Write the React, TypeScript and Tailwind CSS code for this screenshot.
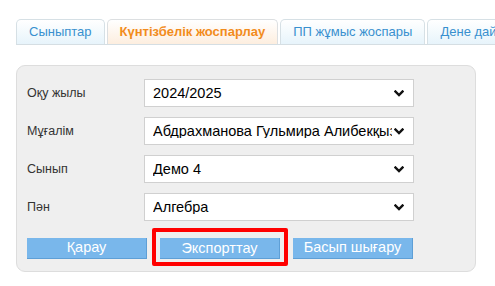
import React from 'react';

const tabs = [
  { label: 'Сыныптар', active: false },
  { label: 'Күнтізбелік жоспарлау', active: true },
  { label: 'ПП жұмыс жоспары', active: false },
  { label: 'Дене дайындығы', active: false },
];

const fields = [
  { label: 'Оқу жылы', value: '2024/2025' },
  { label: 'Мұғалім', value: 'Абдрахманова Гульмира Алибекқызы' },
  { label: 'Сынып', value: 'Демо 4' },
  { label: 'Пән', value: 'Алгебра' },
];

const Chevron = () => (
  <svg width="10" height="7" viewBox="0 0 10 7" className="shrink-0">
    <path d="M1.5 1.5 L5 5 L8.5 1.5" fill="none" stroke="#111" strokeWidth="2.4" strokeLinecap="square" />
  </svg>
);

const Field = ({ label, value }: { label: string; value: string }) => (
  <div className="flex items-center h-[28px]">
    <div className="w-[117px] text-[12.5px] text-[#333]">{label}</div>
    <div className="flex items-center w-[270px] h-[28px] bg-white border border-[#d0d0d0] pl-[8px] pr-[9px] gap-[2px]">
      <span className="flex-1 overflow-hidden whitespace-nowrap text-[14.5px] text-black leading-none">{value}</span>
      <Chevron />
    </div>
  </div>
);

const Btn = ({ children }: { children: React.ReactNode }) => (
  <button className="w-[120px] h-[21px] bg-[#79b7eb] border-b border-r border-[#5e9fd6] text-white text-[14.5px] leading-none">
    {children}
  </button>
);

export default function App() {
  return (
    <div className="w-[495px] h-[286px] bg-white overflow-hidden pt-[19px] pl-[16px] font-['Liberation_Sans',Arial,sans-serif]">
      <div className="flex gap-[2px] border-b border-[#d5dee3] h-[26px] whitespace-nowrap overflow-hidden">
        {tabs.map((t) => (
          <div
            key={t.label}
            className={
              t.active
                ? 'h-[25px] px-[12px] flex items-center rounded-t-[5px] border border-b-0 border-[#dcdfe1] bg-gradient-to-b from-white to-[#fdeedf] text-[#f28c1c] font-bold text-[13px]'
                : 'h-[25px] px-[12px] flex items-center rounded-t-[5px] border border-b-0 border-[#d6e0e5] bg-gradient-to-b from-white to-[#e7f4fb] text-[#3990cf] text-[13px]'
            }
          >
            {t.label}
          </div>
        ))}
      </div>

      <div className="mt-[20px] w-[460px] h-[207px] bg-[#efefef] border border-[#dddddd] rounded-[9px] pt-[13px] pl-[10px]">
        <div className="flex flex-col gap-[10px]">
          {fields.map((f) => (
            <Field key={f.label} label={f.label} value={f.value} />
          ))}
        </div>
        <div className="flex items-center gap-[13px] mt-[15px]">
          <Btn>Қарау</Btn>
          <div className="relative">
            <Btn>Экспорттау</Btn>
            <div className="absolute -left-[8px] -top-[8px] w-[136px] h-[38px] border-[4px] border-[#ff0000] rounded-[2px] pointer-events-none" />
          </div>
          <Btn>Басып шығару</Btn>
        </div>
      </div>
    </div>
  );
}
